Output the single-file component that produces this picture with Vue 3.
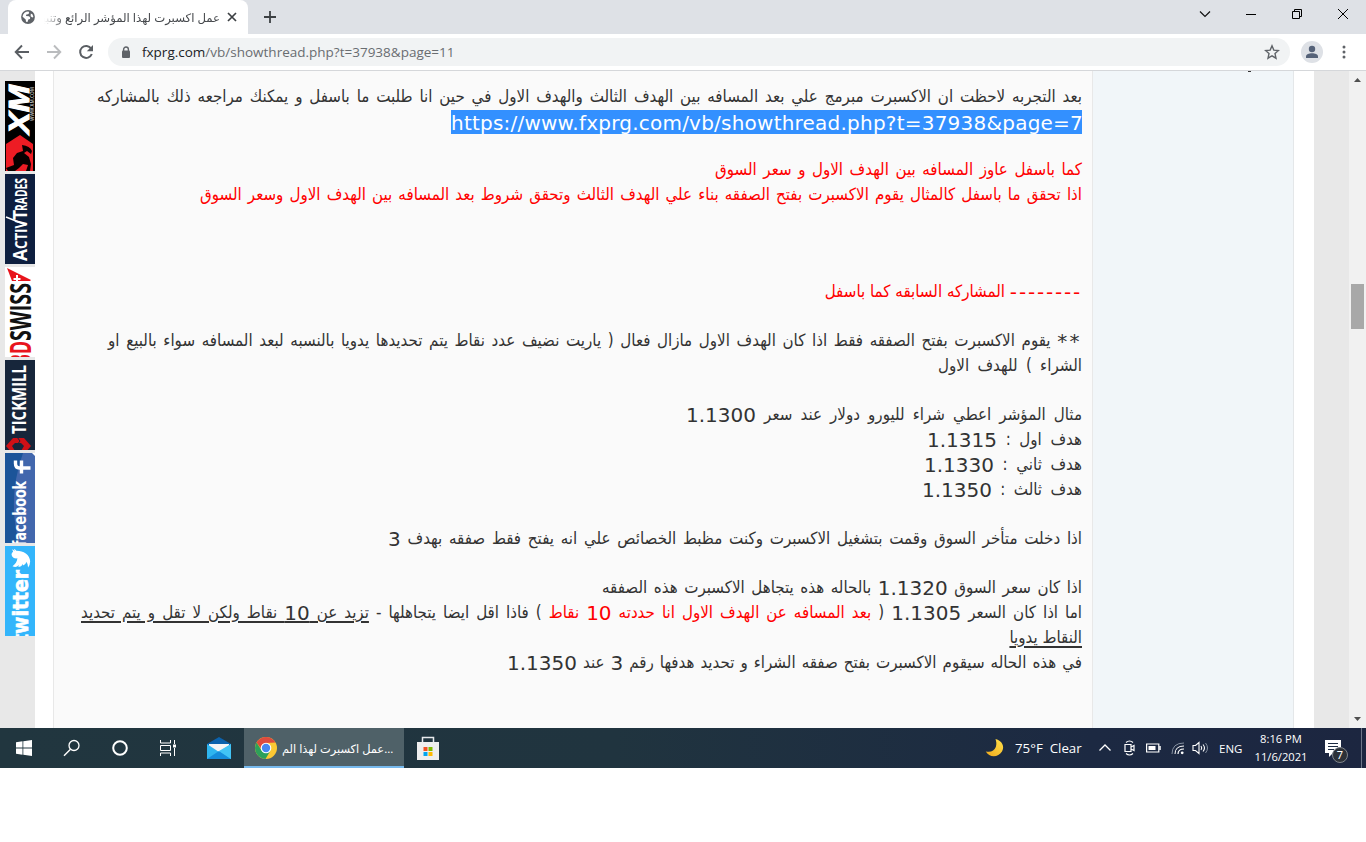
<script setup>
// post lines; width is the measured extent of each line, gap is the blank space above it
const lines = [
  { width: 985, parts: [{ t: 'بعد التجربه لاحظت ان الاكسبرت مبرمج علي بعد المسافه بين الهدف الثالث والهدف الاول في حين انا طلبت ما باسفل و يمكنك مراجعه ذلك بالمشاركه' }] },
  { width: 631, link: true, parts: [{ t: 'https://www.fxprg.com/vb/showthread.php?t=37938&page=7', c: 'selected' }] },
  { width: 367, gap: 'gap-1', parts: [{ t: 'كما باسفل عاوز المسافه بين الهدف الاول و سعر السوق', c: 'red' }] },
  { width: 882, parts: [{ t: 'اذا تحقق ما باسفل كالمثال يقوم الاكسبرت بفتح الصفقه بناء علي الهدف الثالث وتحقق شروط بعد المسافه بين الهدف الاول وسعر السوق', c: 'red' }] },
  { width: 254, gap: 'gap-3', parts: [{ t: '--------', c: 'num red dashes' }, { t: ' المشاركه السابقه كما باسفل', c: 'red' }] },
  { width: 974, gap: 'gap-1', parts: [{ t: '**', c: 'num stars' }, { t: ' يقوم الاكسبرت بفتح الصفقه فقط اذا كان الهدف الاول مازال فعال ( ياريت نضيف عدد نقاط يتم تحديدها يدويا بالنسبه لبعد المسافه سواء بالبيع او' }] },
  { width: 144, parts: [{ t: 'الشراء ) للهدف الاول' }] },
  { width: 396, gap: 'gap-1', parts: [{ t: 'مثال المؤشر اعطي شراء لليورو دولار عند سعر ' }, { t: '1.1300', c: 'num' }] },
  { width: 155, parts: [{ t: 'هدف اول : ' }, { t: '1.1315', c: 'num' }] },
  { width: 158, parts: [{ t: 'هدف ثاني : ' }, { t: '1.1330', c: 'num' }] },
  { width: 160, parts: [{ t: 'هدف ثالث : ' }, { t: '1.1350', c: 'num' }] },
  { width: 694, gap: 'gap-1', parts: [{ t: 'اذا دخلت متأخر السوق وقمت بتشغيل الاكسبرت وكنت مظبط الخصائص علي انه يفتح فقط صفقه بهدف ' }, { t: '3', c: 'num' }] },
  { width: 480, gap: 'gap-1', parts: [{ t: 'اذا كان سعر السوق ' }, { t: '1.1320', c: 'num' }, { t: ' بالحاله هذه يتجاهل الاكسبرت هذه الصفقه' }] },
  {
    width: 1001,
    parts: [
      { t: 'اما اذا كان السعر ' },
      { t: '1.1305', c: 'num' },
      { t: ' ( ' },
      { t: 'بعد المسافه عن الهدف الاول انا حددته ', c: 'red' },
      { t: '10', c: 'num red' },
      { t: ' نقاط', c: 'red' },
      { t: ' ) فاذا اقل ايضا يتجاهلها - ' },
      { t: 'تزيد عن ', c: 'under' },
      { t: '10', c: 'num under' },
      { t: ' نقاط ولكن لا تقل و يتم تحديد', c: 'under' },
    ],
  },
  { width: 72, parts: [{ t: 'النقاط يدويا', c: 'under' }] },
  { width: 575, parts: [{ t: 'في هذه الحاله سيقوم الاكسبرت بفتح صفقه الشراء و تحديد هدفها رقم ' }, { t: '3', c: 'num' }, { t: ' عند ' }, { t: '1.1350', c: 'num' }] },
];
</script>

<template>
  <div class="screen">
    <header class="tab-strip">
      <div class="tab">
        <svg class="globe" width="14" height="14" viewBox="0 0 14 14">
          <circle cx="7" cy="7" r="6.9" fill="#5f6368" />
          <path d="M1.500 6.500C2 3.500 4.500 1.500 7.500 1.600L8.300 3 7 4.300 5.300 4.600 5 6l3 .2 1.200 1.300-.2 1.500-1.700.6-.8 2.400-1.500-.3-.3-2.300L3 8z" fill="#fff" />
          <path d="M9.800 3.500l1.800 1 .8 2.500-1.200.4-1.600-1.200z" fill="#fff" />
        </svg>
        <div class="tab-title" dir="rtl">عمل اكسبرت لهذا المؤشر الرائع وتنبيهات</div>
        <svg class="tab-close" width="10" height="10" viewBox="0 0 10 10">
          <path d="M1 1l8 8M9 1l-8 8" stroke="#3c4043" stroke-width="1.7" />
        </svg>
      </div>
      <svg class="new-tab" width="14" height="14" viewBox="0 0 14 14">
        <path d="M7 1v12M1 7h12" stroke="#3c4043" stroke-width="1.8" />
      </svg>
      <div class="window-buttons">
        <svg width="12" height="12" viewBox="0 0 12 12"><path d="M1 3.5l5 5 5-5" fill="none" stroke="#111" stroke-width="1.200" /></svg>
        <svg width="12" height="12" viewBox="0 0 12 12"><path d="M1 6.5h10" stroke="#000" /></svg>
        <svg width="12" height="12" viewBox="0 0 12 12"><path d="M1.5 3.5h7v7h-7zM3.5 3.5v-2h7v7h-2" fill="none" stroke="#000" /></svg>
        <svg width="12" height="12" viewBox="0 0 12 12"><path d="M1 1l10 10M11 1L1 11" stroke="#000" /></svg>
      </div>
    </header>

    <div class="toolbar">
      <svg class="nav-icon" width="16" height="16" viewBox="0 0 16 16"><path d="M15 8H2M8 1.5L1.7 8 8 14.5" fill="none" stroke="#5a5e63" stroke-width="1.9" /></svg>
      <svg class="nav-icon" width="16" height="16" viewBox="0 0 16 16"><path d="M1 8h13M8 1.5L14.3 8 8 14.5" fill="none" stroke="#babcbe" stroke-width="1.9" /></svg>
      <svg class="nav-icon reload" width="16" height="16" viewBox="0 0 16 16">
        <path d="M13.2 4.6A6 6 0 1 0 13.8 10" fill="none" stroke="#5a5e63" stroke-width="2" />
        <path d="M15 1v6.2H8.8z" fill="#5a5e63" />
      </svg>
      <div class="address">
        <svg width="10" height="13" viewBox="0 0 10 13">
          <path d="M2.6 5V3.4a2.4 2.4 0 0 1 4.8 0V5" fill="none" stroke="#5f6368" stroke-width="1.4" />
          <rect x="1" y="4.6" width="8" height="7.4" rx="1" fill="#5f6368" />
        </svg>
        <span class="url"><b>fxprg.com</b>/vb/showthread.php?t=37938&amp;page=11</span>
        <svg class="star" width="16" height="16" viewBox="0 0 16 16">
          <path d="M8 1.8l1.8 4.3 4.7.4-3.5 3.1 1 4.6L8 11.8l-4 2.4 1-4.6L1.500 6.500l4.700-.4z" fill="none" stroke="#5f6368" stroke-width="1.4" />
        </svg>
      </div>
      <svg class="profile" width="22" height="22" viewBox="0 0 22 22">
        <circle cx="11" cy="11" r="11" fill="#dee1e6" />
        <circle cx="11" cy="8" r="3.200" fill="#556278" />
        <path d="M5 17v-1.500c0-2 3-3.200 6-3.200s6 1.200 6 3.200V17z" fill="#556278" />
      </svg>
      <svg class="menu" width="4" height="16" viewBox="0 0 4 16">
        <circle cx="2" cy="3" r="1.500" fill="#5f6368" /><circle cx="2" cy="8" r="1.500" fill="#5f6368" /><circle cx="2" cy="13" r="1.500" fill="#5f6368" />
      </svg>
    </div>

    <main class="page">
      <aside class="banners">
        <svg width="30" height="90" viewBox="0 0 30 90">
          <rect width="30" height="90" fill="#000" />
          <text class="xm" transform="translate(23.500 53) rotate(-90)" font-size="30" font-weight="700" font-style="italic" textLength="49" lengthAdjust="spacingAndGlyphs" fill="#fff" stroke="#fff">XM</text>
          <text transform="translate(28.500 40) rotate(-90)" font-size="4.500" font-weight="600" textLength="34" lengthAdjust="spacingAndGlyphs" fill="#ccc">WWW.XM.COM</text>
          <path d="M1 63L15 54 28 63V90H1z" fill="#ed1c24" />
          <path d="M17 64q8 1 10 6l-1 3-4-3-3 2 5 4 2 7-1 7h-4l2-6-5-1-4 4-4 3H3l-2-3 8-3-1-7 4-5 6-2z" fill="#080000" />
        </svg>
        <svg width="30" height="90" viewBox="0 0 30 90">
          <rect width="30" height="90" fill="#0e1f3f" />
          <g font-weight="700" fill="#fff">
            <text transform="translate(22 87) rotate(-90)" font-size="19" textLength="12" lengthAdjust="spacingAndGlyphs">A</text>
            <text transform="translate(22 75) rotate(-90)" font-size="16" textLength="29" lengthAdjust="spacingAndGlyphs">CTIV</text>
            <text transform="translate(22 46) rotate(-90)" font-size="20" textLength="10" lengthAdjust="spacingAndGlyphs">T</text>
            <text transform="translate(22 37) rotate(-90)" font-size="16" textLength="33" lengthAdjust="spacingAndGlyphs">RADES</text>
          </g>
          <path d="M21 51L1 43" stroke="#fff" stroke-width="1.500" />
        </svg>
        <svg width="30" height="90" viewBox="0 0 30 90">
          <rect width="30" height="90" fill="#fff" />
          <g font-weight="700" font-size="29">
            <text transform="translate(26 99) rotate(-90)" textLength="25" lengthAdjust="spacingAndGlyphs" fill="#e8151d">BD</text>
            <text transform="translate(26 74) rotate(-90)" textLength="58" lengthAdjust="spacingAndGlyphs" fill="#111">SWISS</text>
          </g>
          <path d="M2 1l24 12-1 1H7z" fill="#e8151d" />
          <path d="M12 8v8M8.500 12h7" stroke="#fff" stroke-width="2" />
        </svg>
        <svg width="30" height="90" viewBox="0 0 30 90">
          <rect width="30" height="90" fill="#17263b" />
          <text transform="translate(21 74) rotate(-90)" font-size="19" font-weight="700" textLength="69" lengthAdjust="spacingAndGlyphs" fill="#fff">TICKMILL</text>
          <path d="M8 78h11l7 8-7 8H8l-7-8z" fill="#cf1016" />
          <path d="M10 83h6l3 3-3 5h-6l-3-5z" fill="#17263b" />
          <path d="M12 77l3 4-3 4" fill="none" stroke="#17263b" />
        </svg>
        <svg width="30" height="90" viewBox="0 0 30 90">
          <rect width="30" height="90" fill="#1b5499" />
          <path d="M30 0H18Q2 45 14 90h16z" fill="#4267ad" />
          <path d="M27 0h3v3z" fill="#fff" />
          <path d="M26 15.500H15Q11 15.500 11 11V8M17 21V8" transform="translate(-.5 -.5)" fill="none" stroke="#fff" stroke-width="3.400" />
          <text class="round" transform="translate(21 93) rotate(-90)" font-size="17" font-weight="700" textLength="65" lengthAdjust="spacingAndGlyphs" fill="#fff">facebook</text>
        </svg>
        <svg width="30" height="90" viewBox="0 0 30 90">
          <rect width="30" height="90" fill="#33b5fb" />
          <path transform="translate(4.500 21.500) rotate(-90) scale(.78 .95)" d="M23.950 4.570a10 10 0 0 1-2.820.780 4.960 4.960 0 0 0 2.160-2.720c-.950.550-2 .960-3.130 1.180a4.920 4.920 0 0 0-8.380 4.480C7.690 8.100 4.070 6.130 1.640 3.160a4.820 4.820 0 0 0 1.520 6.570 4.900 4.900 0 0 1-2.230-.620v.060a4.920 4.920 0 0 0 3.950 4.830 5 5 0 0 1-2.210.080 4.940 4.940 0 0 0 4.600 3.420A9.870 9.870 0 0 1 0 19.540a14 14 0 0 0 7.560 2.210c9.050 0 14-7.500 14-13.980v-.640a9.940 9.940 0 0 0 2.390-2.560z" fill="#fff" />
          <text class="round" transform="translate(22.500 97) rotate(-90)" font-size="21" font-weight="700" textLength="73" lengthAdjust="spacingAndGlyphs" fill="#fff" stroke="#fff" stroke-width=".6">twitter</text>
        </svg>
      </aside>

      <div class="sheet">
        <article class="post" dir="rtl">
          <p v-for="(line, i) in lines" :key="i" class="line" :class="[line.gap, { link: line.link }]" :style="{ width: line.width + 'px' }"><span v-for="(part, j) in line.parts" :key="j" :class="part.c">{{ part.t }}</span></p>
        </article>
        <div class="user-column"><i class="user-rest"></i></div>
      </div>

      <div class="scrollbar">
        <svg width="7" height="4" viewBox="0 0 7 4"><path d="M0 4l3.500-4L7 4z" fill="#505050" /></svg>
        <div class="thumb"></div>
        <svg class="down" width="7" height="4" viewBox="0 0 7 4"><path d="M0 0l3.500 4L7 0z" fill="#505050" /></svg>
      </div>
    </main>

    <footer class="taskbar">
      <div class="task"><svg width="16" height="16" viewBox="0 0 16 16"><path d="M0 2.200l6.500-.9v6.300H0zM7.300 1.200L16 0v7.600H7.300zM0 8.400h6.500v6.300L0 13.800zM7.300 8.400H16V16l-8.700-1.200z" fill="#fff" /></svg></div>
      <div class="task"><svg width="18" height="18" viewBox="0 0 18 18"><circle cx="11" cy="6.500" r="5" fill="none" stroke="#fff" stroke-width="1.300" /><path d="M7.500 10.200L1 16.700" stroke="#fff" stroke-width="1.400" /></svg></div>
      <div class="task"><svg width="18" height="18" viewBox="0 0 18 18"><circle cx="9" cy="9" r="6.800" fill="none" stroke="#fff" stroke-width="2" /></svg></div>
      <div class="task"><svg width="18" height="18" viewBox="0 0 18 18"><path d="M1.500 1v3h10V1M1.500 17v-3h10v3M1.500 6.500h10v5h-10zM15.500 1v4M15.500 9v8" fill="none" stroke="#fff" /><path d="M14 5.500h3v3h-3z" fill="#fff" /></svg></div>
      <div class="task mail">
        <svg width="24" height="22" viewBox="0 0 24 22">
          <path d="M0 7L12 0l12 7v2H0z" fill="#0b62ad" />
          <path d="M2 7h20v8H2z" fill="#f4f5f6" />
          <path d="M0 7l12 8L24 7v15H0z" fill="#2fb5ef" />
          <path d="M0 22l12-8 12 8z" fill="#168ddb" />
          <path d="M24 7v15L12 14z" fill="#42c4f5" />
        </svg>
      </div>
      <div class="task-active">
        <svg width="22" height="22" viewBox="0 0 22 22">
          <circle cx="11" cy="11" r="11" fill="#fcc934" />
          <path d="M1.500 5.500A11 11 0 0 1 20.500 5.500L11 6 7 13z" fill="#dd4b3e" />
          <path d="M1.500 5.500A11 11 0 0 0 10.500 22L15.500 13.500 7 14z" fill="#2da05a" />
          <circle cx="11" cy="11" r="5.300" fill="#fff" />
          <circle cx="11" cy="11" r="4.200" fill="#4688f1" />
        </svg>
        <span>عمل اكسبرت لهذا الم...</span>
      </div>
      <div class="task store">
        <svg width="24" height="24" viewBox="0 0 24 24">
          <path d="M6.500 8V1.500h11V8" fill="none" stroke="#e8eaed" stroke-width="1.500" />
          <path d="M1 6h22v18H1z" fill="#eee" />
          <path d="M7.500 11h4v4h-4z" fill="#f25022" /><path d="M12.500 11h4v4h-4z" fill="#7fba00" />
          <path d="M7.500 16h4v4h-4z" fill="#00a4ef" /><path d="M12.500 16h4v4h-4z" fill="#ffb900" />
        </svg>
      </div>

      <div class="tray">
        <svg class="moon" width="20" height="20" viewBox="0 0 20 20">
          <defs><linearGradient id="moon" x1="0" y1="1" x2="1" y2="0"><stop offset="0" stop-color="#f0a91c" /><stop offset="1" stop-color="#ffe04a" /></linearGradient></defs>
          <path d="M10.500 1C17 2.500 20 8.500 17 13.500 13 20 4 19.500.8 13.500c5 1 8.500-.5 10-4.500 1-3 .5-5.500-.3-8z" fill="url(#moon)" />
        </svg>
        <span class="weather">75°F&nbsp; Clear</span>
        <svg class="chevron" width="14" height="14" viewBox="0 0 14 14"><path d="M1.500 9.500L7 4l5.500 5.500" fill="none" stroke="#fff" stroke-width="1.300" /></svg>
        <svg class="meet" width="13" height="16" viewBox="0 0 13 16"><path d="M2 4.500h6v7H2zM8 7l3-1.500v5L8 9M3 2.500Q6.500-.5 10 2.500M3 13.500q3.500 3 7 0" fill="none" stroke="#fff" stroke-width="1.200" /></svg>
        <svg class="battery" width="15" height="10" viewBox="0 0 15 10"><path d="M.6 1h12.200v8H.6z" fill="none" stroke="#fff" stroke-width="1.200" /><path d="M2.500 3h7v4h-7z" fill="#fff" /><path d="M14 3v4" stroke="#fff" stroke-width="1.500" /></svg>
        <svg class="wifi" width="14" height="14" viewBox="0 0 14 14"><path d="M1 13Q1 2 13 2" fill="none" stroke="#8590a0" /><path d="M4 13q0-8 9-8" fill="none" stroke="#fff" /><path d="M7 13q0-5 6-5" fill="none" stroke="#fff" stroke-width="1.200" /><circle cx="11.200" cy="11.800" r="1.400" fill="#fff" /></svg>
        <svg class="volume" width="17" height="14" viewBox="0 0 17 14"><path d="M1 4.500h2.500L7 1.500v11L3.500 9.500H1zM9 5q1.500 2 0 4M11 3.500q3 3.500 0 7" fill="none" stroke="#fff" stroke-width="1.100" /><path d="M13.500 2q4 5 0 10" fill="none" stroke="#8590a0" /></svg>
        <span class="lang">ENG</span>
        <div class="clock"><span>8:16 PM</span><span>11/6/2021</span></div>
        <div class="notices">
          <svg width="17" height="17" viewBox="0 0 17 17"><path d="M0 0h16v13H8l-4 4v-4H0z" fill="#fff" /><path d="M3 3.500h10M3 6.500h10M3 9.500h6" stroke="#1d2b42" /></svg>
          <span class="count">7</span>
        </div>
        <i class="desktop-edge"></i>
      </div>
    </footer>
  </div>
</template>

<style>
body {
  margin: 0;
  background: #fff;
}
</style>

<style scoped>
.screen {
  display: flex;
  flex-direction: column;
  width: 1366px;
  height: 842px;
  overflow: hidden;
  background: #fff;
  font-family: "Noto Sans", "DejaVu Sans", sans-serif;
}

svg {
  display: block;
  flex: none;
}

.tab-strip {
  display: flex;
  align-items: center;
  box-sizing: border-box;
  height: 34px;
  padding-left: 8px;
  background: #dee1e6;
}

.tab {
  display: flex;
  align-items: center;
  box-sizing: border-box;
  width: 240px;
  height: 34px;
  padding: 0 11px 0 13px;
  border-radius: 8px 8px 0 0;
  background: #fff;
}

.tab-title {
  width: 176px;
  margin-left: 9px;
  overflow: hidden;
  font-size: 11.700px;
  line-height: 20px;
  color: #45484c;
  white-space: nowrap;
  mask-image: linear-gradient(to right, transparent, #000 22px);
}

.tab-close {
  margin-left: 7px;
}

.new-tab {
  margin-left: 15px;
}

.window-buttons {
  display: flex;
  gap: 34px;
  margin: -6px 17px 0 auto;
}

.toolbar {
  display: flex;
  align-items: center;
  box-sizing: border-box;
  height: 37px;
  padding-left: 14px;
  border-bottom: 1px solid #d5d7da;
  background: #fff;
}

.nav-icon {
  margin-right: 16px;
}

.nav-icon.reload {
  margin-right: 14px;
}

.address {
  display: flex;
  align-items: center;
  width: 1182px;
  height: 28px;
  border-radius: 14px;
  background: #f1f3f4;
}

.address > svg:first-child {
  margin-left: 13px;
}

.url {
  margin-left: 11px;
  font-family: "Open Sans", sans-serif;
  font-size: 13.500px;
  color: #696d71;
  white-space: nowrap;
}

.url b {
  font-weight: 400;
  color: #202124;
}

.star {
  margin: 0 10px 0 auto;
}

.profile {
  margin-left: 11px;
}

.menu {
  margin-left: 19px;
}

.page {
  display: flex;
  height: 657px;
  overflow: hidden;
  background: #e8e8e8;
}

.banners {
  display: flex;
  flex-direction: column;
  gap: 3px;
  width: 30px;
  padding: 10px 0 0 5px;
  font-family: "Open Sans", sans-serif;
}

.banners svg {
  overflow: hidden;
}

.banners .round {
  font-family: "DejaVu Sans", sans-serif;
}

.banners .xm {
  font-family: "Liberation Sans", sans-serif;
}

.sheet {
  display: flex;
  box-sizing: border-box;
  width: 1279px;
  padding: 0 20px 0 18px;
  background: #fff;
}

.post {
  box-sizing: border-box;
  width: 1040px;
  padding: 14px 10px 0 0;
  border: solid #e8e8e8;
  border-width: 0 1px;
  background: #fafafa;
  font-family: "DejaVu Sans Condensed", "DejaVu Sans", sans-serif;
  font-stretch: condensed;
  color: #333;
}

.line {
  height: 25px;
  margin: 0;
  font-size: 16.800px;
  line-height: 23px;
  text-align: justify;
  text-align-last: justify;
  white-space: nowrap;
}

.line.link {
  height: 24px;
  line-height: 26px;
  direction: ltr;
}

.line.gap-1 {
  margin-top: 24px;
}

.line.gap-3 {
  margin-top: 72px;
}

.num,
.selected {
  font-family: "DejaVu Sans", sans-serif;
  font-stretch: normal;
  font-size: 20px;
}

.num {
  line-height: 18px;
  vertical-align: -2px;
}

.dashes,
.stars {
  display: inline-block;
}

.dashes {
  letter-spacing: 1.800px;
}

.stars {
  letter-spacing: 2.400px;
}

.red {
  color: #f00;
}

.under {
  text-decoration: underline 1.500px;
  text-underline-offset: 3px;
}

.num.under {
  text-underline-offset: 1px;
}

.selected {
  display: block;
  height: 24px;
  letter-spacing: .222px;
  color: #fff;
  background: #3390ff;
}

.user-column {
  box-sizing: border-box;
  width: 201px;
  border-right: 1px solid #e4e7e9;
  background: #f1f6f9;
}

.user-rest {
  display: block;
  width: 3px;
  height: 1px;
  margin-left: 155px;
  background: #333;
}

.scrollbar {
  display: flex;
  flex-direction: column;
  align-items: center;
  box-sizing: border-box;
  width: 17px;
  margin-left: auto;
  padding: 7px 0;
  background: #f1f1f1;
}

.thumb {
  width: 13px;
  height: 45px;
  margin-top: 202px;
  background: #a8a8a8;
}

.down {
  margin-top: auto;
}

.taskbar {
  display: flex;
  height: 40px;
  background: linear-gradient(to right, #21363f, #20343f 45%, #1c2942 80%, #1c2640);
  color: #fff;
}

.task {
  display: flex;
  align-items: center;
  justify-content: center;
  width: 48px;
}

.mail {
  width: 52px;
}

.mail svg {
  margin-left: 2px;
}

.task-active {
  display: flex;
  align-items: center;
  box-sizing: border-box;
  width: 160px;
  padding: 2px 0 0 11px;
  border-bottom: 2px solid #76b9ed;
  background: #4f6168;
}

.task-active span {
  width: 112px;
  margin-left: 5px;
  font-size: 11.400px;
  white-space: nowrap;
}

.tray {
  display: flex;
  align-items: center;
  width: 381px;
  margin-left: auto;
  font-size: 12px;
}

.weather {
  width: 68px;
  margin-left: 10px;
  font-family: "Open Sans", sans-serif;
  font-size: 13.300px;
  white-space: nowrap;
}

.chevron {
  margin-left: 15px;
}

.meet {
  margin-left: 11px;
}

.battery {
  margin-left: 10px;
}

.wifi {
  margin-left: 10px;
}

.volume {
  margin-left: 7px;
}

.lang {
  width: 24px;
  margin-left: 10px;
  font-family: "Open Sans", sans-serif;
  font-size: 11.500px;
}

.clock {
  display: flex;
  flex-direction: column;
  align-items: center;
  width: 54px;
  margin-left: 11px;
  font-family: "Open Sans", sans-serif;
  font-size: 11.200px;
  line-height: 18px;
  white-space: nowrap;
}

.notices {
  position: relative;
  margin-left: 17px;
}

.count {
  position: absolute;
  left: 7px;
  top: 7px;
  width: 14px;
  height: 14px;
  border: 1px solid #80858c;
  border-radius: 50%;
  background: #2c3138;
  font-size: 11px;
  line-height: 14px;
  text-align: center;
}

.desktop-edge {
  width: 1px;
  height: 40px;
  margin-left: 19px;
  background: #6d7688;
}
</style>
